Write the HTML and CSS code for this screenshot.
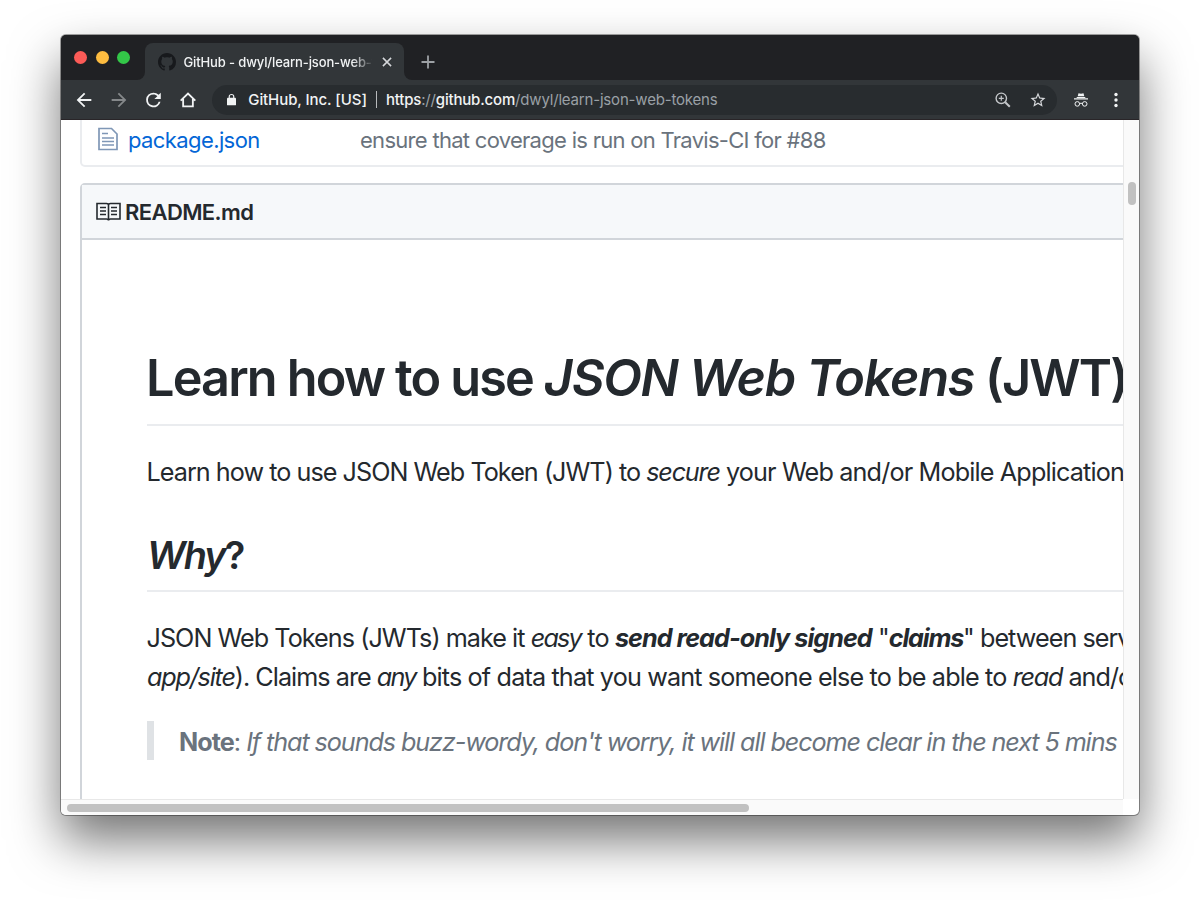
FILE: index.html
```html
<!DOCTYPE html>
<html lang="en">
<head>
  <meta charset="UTF-8">
  <title>GitHub - dwyl/learn-json-web-tokens</title>
  <link rel="stylesheet" href="styles.css">
</head>
<body>
  <div class="window">
    <div class="tab-bar">
      <div class="lights">
        <span class="light red"></span>
        <span class="light yellow"></span>
        <span class="light green"></span>
      </div>
      <div class="tab">
        <svg class="favicon" width="18" height="18" viewBox="0 0 16 16"><path fill="#17191c" d="M8 0C3.58 0 0 3.58 0 8c0 3.54 2.29 6.53 5.47 7.59.4.07.55-.17.55-.38 0-.19-.01-.82-.01-1.49-2.01.37-2.53-.49-2.69-.94-.09-.23-.48-.94-.82-1.13-.28-.15-.68-.52-.01-.53.63-.01 1.08.58 1.23.82.72 1.21 1.87.87 2.33.66.07-.52.28-.87.51-1.07-1.78-.2-3.64-.89-3.64-3.95 0-.87.31-1.59.82-2.15-.08-.2-.36-1.02.08-2.12 0 0 .67-.21 2.2.82.64-.18 1.32-.27 2-.27s1.36.09 2 .27c1.53-1.04 2.2-.82 2.2-.82.44 1.1.16 1.92.08 2.12.51.56.82 1.27.82 2.15 0 3.07-1.87 3.75-3.65 3.95.29.25.54.73.54 1.48 0 1.07-.01 1.93-.01 2.2 0 .21.15.46.55.38A8.01 8.01 0 0 0 16 8c0-4.42-3.58-8-8-8z"/></svg>
        <span class="tab-title">GitHub - dwyl/learn-json-web-t</span>
        <svg class="tab-close" width="10" height="10" viewBox="0 0 10 10"><path d="M.9.9l8.2 8.2M9.1.9L.9 9.1" stroke="#d5d7da" stroke-width="1.5"/></svg>
      </div>
      <div class="tab-rest">
        <svg width="14" height="14" viewBox="0 0 14 14"><path d="M7 .5v13M.5 7h13" stroke="#9da1a5" stroke-width="1.8"/></svg>
      </div>
    </div>

    <div class="toolbar">
      <svg class="nav-icon" width="22" height="22" viewBox="0 0 24 24"><path fill="#f1f3f4" d="M20 11H7.83l5.59-5.59L12 4l-8 8 8 8 1.41-1.41L7.83 13H20v-2z"/></svg>
      <svg class="nav-icon" width="22" height="22" viewBox="0 0 24 24"><path fill="#85888a" d="M12 4l-1.41 1.41L16.17 11H4v2h12.17l-5.58 5.59L12 20l8-8z"/></svg>
      <svg class="nav-icon" width="22" height="22" viewBox="0 0 24 24"><path fill="#f1f3f4" d="M18.150 6.350A7.958 7.958 0 0 0 12.500 4a8 8 0 1 0 7.730 10h-2.080A6 6 0 1 1 12.500 6c1.660 0 3.140.690 4.220 1.780L13.500 11h7V4l-2.350 2.350z"/></svg>
      <svg class="nav-icon" width="22" height="22" viewBox="0 0 24 24"><path fill="none" stroke="#f1f3f4" stroke-width="2" d="M4 12.600L12 5l8 7.600M6.700 11v8h10.600v-8"/></svg>
      <div class="address">
        <svg class="lock" width="9" height="13" viewBox="0 0 10 13"><rect y="4.500" width="10" height="8.500" rx="1" fill="#f1f3f4"/><path d="M2.500 5V3.200a2.500 2.300 0 0 1 5 0V5" fill="none" stroke="#f1f3f4" stroke-width="1.300"/></svg>
        <span class="org">GitHub, Inc. [US]</span>
        <span class="divider"></span>
        <span class="url"><b>https</b>://<b>github.com</b>/dwyl/learn-json-web-tokens</span>
        <svg class="zoom" width="16" height="16" viewBox="0 0 16 16" fill="none" stroke="#c4c7ca"><circle cx="6.300" cy="6.300" r="5.200" stroke-width="1.400"/><path d="M10.200 10.200l4.600 4.600" stroke-width="2"/><path d="M6.300 3.800v5M3.800 6.300h5" stroke-width="1.200"/></svg>
        <svg class="star" width="18" height="18" viewBox="0 0 24 24"><path fill="#d5d7da" d="M22 9.240l-7.190-.62L12 2 9.190 8.630 2 9.240l5.460 4.730L5.820 21 12 17.270 18.180 21l-1.630-7.030L22 9.240zM12 15.400l-3.760 2.270 1-4.280-3.320-2.880 4.380-.38L12 6.100l1.710 4.040 4.380.38-3.320 2.880 1 4.280L12 15.400z"/></svg>
      </div>
      <svg class="incognito" width="14" height="14" viewBox="0 0 14 14"><path fill="#f1f3f4" d="M3.700 3.300L4.500.3 7 .8 9.500.3l.8 3zM0 5.200h14v1.300H0zM2.700 4h8.600v1H2.700z"/><g fill="none" stroke="#f1f3f4"><circle cx="3.300" cy="10.900" r="2.300"/><circle cx="10.700" cy="10.900" r="2.300"/><path d="M5.500 10.600q1.500-.8 3 0"/></g></svg>
      <svg class="menu" width="4" height="16" viewBox="0 0 4 16" fill="#f1f3f4"><circle cx="2" cy="2.500" r="1.700"/><circle cx="2" cy="8" r="1.700"/><circle cx="2" cy="13.500" r="1.700"/></svg>
    </div>

    <div class="viewport">
      <div class="page">
        <div class="files">
          <svg class="file-icon" width="20" height="24" viewBox="0 0 20 24" fill="none" stroke="#7f97b6" stroke-width="1.700"><path d="M1 1.500h12.500l5.500 5.500v15.500H1z"/><path d="M4 6.500h6M4 11h12M4 14.500h12M4 18h12" stroke-width="1.500"/></svg>
          <a class="file-name">package.json</a>
          <span class="file-message">ensure that coverage is run on Travis-CI for #88</span>
        </div>

        <div class="readme">
          <div class="readme-header">
            <svg class="book" width="25" height="20" viewBox="0 0 25 20" fill="none" stroke="#24292e" stroke-width="1.600"><path d="M1 1.500h9.500q2 0 2 1.500 0-1.500 2-1.500H24v15.500h-9.500q-2 0-2 1.500 0-1.500-2-1.500H1zM12.500 2.500v16"/><path d="M4 5.500h6M4 9h6M4 12.500h6M15 5.500h6M15 9h6M15 12.500h6" stroke-width="1.400"/></svg>
            <span>README.md</span>
          </div>
          <div class="markdown">
            <h1>Learn how to use <em>JSON Web Tokens</em> (JWT)</h1>
            <p class="intro">Learn how to use JSON Web Token (JWT) to <em>secure</em><span class="loose"> your Web and/or Mobile Application</span></p>
            <h2><em>Why</em>?</h2>
            <p class="why">JSON Web Tokens (JWTs) make it <em class="tight">easy</em><span class="loose"> to </span><strong><em class="send">send read-only signed</em></strong><span class="loose"> "</span><strong><em>claims</em></strong>" between serv<br><em>app/site</em>). Claims are <em class="tight">any</em><span class="loose"> bits of data that you want someone else to be able to </span><em>read</em> and/o</p>
            <blockquote><strong>Note</strong>: <em>If that sounds buzz-wordy, don't worry, it will all become clear in the next 5 mins</em></blockquote>
          </div>
        </div>
      </div>
      <div class="scroll-y"><span class="thumb"></span></div>
      <div class="scroll-x"><span class="thumb"></span></div>
      <div class="corner"></div>
    </div>
  </div>
</body>
</html>
```
FILE: styles.css
```css
* {
  box-sizing: border-box;
}

body {
  margin: 0;
  height: 902px;
  padding: 35px 61px 0;
  background: #fff;
  font-family: Inter, "Liberation Sans", sans-serif;
  color: #24292e;
  overflow: hidden;
}

svg {
  display: block;
  flex: none;
}

.window {
  width: 1078px;
  height: 780px;
  border-radius: 5px;
  overflow: hidden;
  background: #fff;
  box-shadow: 0 0 0 1px rgba(0, 0, 0, 0.35), 0 25px 50px rgba(0, 0, 0, 0.55);
}

/* tabs */
.tab-bar {
  display: flex;
  height: 45px;
  background: linear-gradient(#202124 30px, #323639 30px);
}

.lights {
  display: flex;
  gap: 8.600px;
  width: 84px;
  padding: 16px 0 0 13.300px;
  background: #202124;
  border-bottom-right-radius: 8px;
}

.light {
  width: 13px;
  height: 13px;
  border-radius: 50%;
}

.red {
  background: #fc5b57;
}

.yellow {
  background: #fdbc40;
}

.green {
  background: #33c748;
}

.tab {
  display: flex;
  align-items: center;
  width: 259px;
  height: 37px;
  margin-top: 8px;
  padding-left: 13px;
  border-radius: 8px 8px 0 0;
  background: #323639;
}

.tab-title {
  width: 188px;
  margin-left: 7.500px;
  overflow: hidden;
  white-space: nowrap;
  font-size: 13px;
  font-weight: 500;
  letter-spacing: -0.130px;
  color: #f1f3f4;
  -webkit-mask-image: linear-gradient(to right, #000 168px, transparent 190px);
  mask-image: linear-gradient(to right, #000 168px, transparent 190px);
}

.tab-close {
  margin-left: 10.500px;
}

.tab-rest {
  flex: 1;
  padding: 20px 0 0 17px;
  background: #202124;
  border-bottom-left-radius: 8px;
}

/* toolbar */
.toolbar {
  display: flex;
  align-items: center;
  height: 40px;
  padding-left: 12px;
  background: #323639;
  border-bottom: 1px solid #292528;
}

.nav-icon {
  margin-right: 12.700px;
}

.address {
  display: flex;
  align-items: center;
  width: 845px;
  height: 30px;
  padding-left: 15px;
  border-radius: 15px;
  background: #282c2f;
  font-size: 15px;
  white-space: nowrap;
  color: #f1f3f4;
}

.org {
  margin-left: 12.500px;
  font-weight: 500;
  letter-spacing: -0.080px;
}

.divider {
  width: 1px;
  height: 17px;
  margin: 0 9px;
  background: #b8babc;
}

.url {
  letter-spacing: -0.180px;
  color: #9aa0a6;
}

.url b {
  font-weight: 500;
  color: #f1f3f4;
}

.zoom {
  margin-left: auto;
}

.star {
  margin: 0 10px 0 18px;
}

.incognito {
  margin-left: 17px;
}

.menu {
  margin-left: 26px;
}

/* page */
.viewport {
  display: grid;
  grid-template-columns: 1062px 16px;
  grid-template-rows: 679px 16px;
}

.page {
  padding-left: 19px;
  overflow: hidden;
}

.files {
  display: flex;
  width: 1100px;
  height: 47px;
  padding: 7px 0 0 16px;
  border: 2px solid #eaecef;
  border-top: 0;
  border-radius: 0 0 5px 5px;
  font-size: 22px;
  line-height: 26px;
}

.file-name {
  width: 232px;
  margin-left: 10px;
  letter-spacing: -0.600px;
  color: #0366d6;
}

.file-message {
  letter-spacing: -0.710px;
  color: #6a737d;
  white-space: nowrap;
}

.readme {
  width: 1300px;
  height: 700px;
  margin-top: 16px;
  border: 2px solid #d1d5da;
  border-radius: 5px;
}

.readme-header {
  display: flex;
  align-items: center;
  gap: 4px;
  height: 55px;
  padding-left: 14px;
  border-bottom: 2px solid #d1d5da;
  background: #f6f8fa;
  font-size: 22px;
  font-weight: 600;
  letter-spacing: -0.600px;
}

.markdown {
  padding: 105px 65px 0;
  font-size: 25.200px;
  line-height: 39px;
  letter-spacing: -0.970px;
  white-space: nowrap;
}

h1,
h2 {
  margin: 0;
  font-weight: 600;
  letter-spacing: -1.850px;
  border-bottom: 2px solid #eaecef;
}

h1 {
  height: 81px;
  font-size: 50.400px;
  line-height: 65px;
  text-indent: -1px;
}

h1 em {
  letter-spacing: -1.300px;
}

h2 {
  height: 61px;
  font-size: 37.800px;
  line-height: 49px;
}

p {
  margin: 0;
  text-indent: -0.500px;
}

p em {
  letter-spacing: -1.200px;
}

.tight {
  letter-spacing: -1.750px;
}

.loose {
  letter-spacing: -0.850px;
}

.send {
  letter-spacing: -0.970px;
}

.intro {
  margin: 27px 0 39px;
}

.why {
  margin: 27px 0 24px;
}

blockquote {
  height: 39px;
  margin: 0;
  padding-left: 25px;
  border-left: 7px solid #dfe2e5;
  line-height: 43px;
  color: #6a737d;
}

blockquote em {
  letter-spacing: -1.095px;
}

/* scrollbars */
.scroll-y {
  padding: 62px 0 0 4px;
  border-left: 1px solid #e8e8e8;
  background: #fafafa;
}

.scroll-x {
  padding: 4px 0 0 6px;
  border-top: 1px solid #e8e8e8;
  background: #fafafa;
}

.thumb {
  display: block;
  border-radius: 5px;
  background: #c1c1c1;
}

.scroll-y .thumb {
  width: 8px;
  height: 23px;
}

.scroll-x .thumb {
  width: 682px;
  height: 8px;
}
```
